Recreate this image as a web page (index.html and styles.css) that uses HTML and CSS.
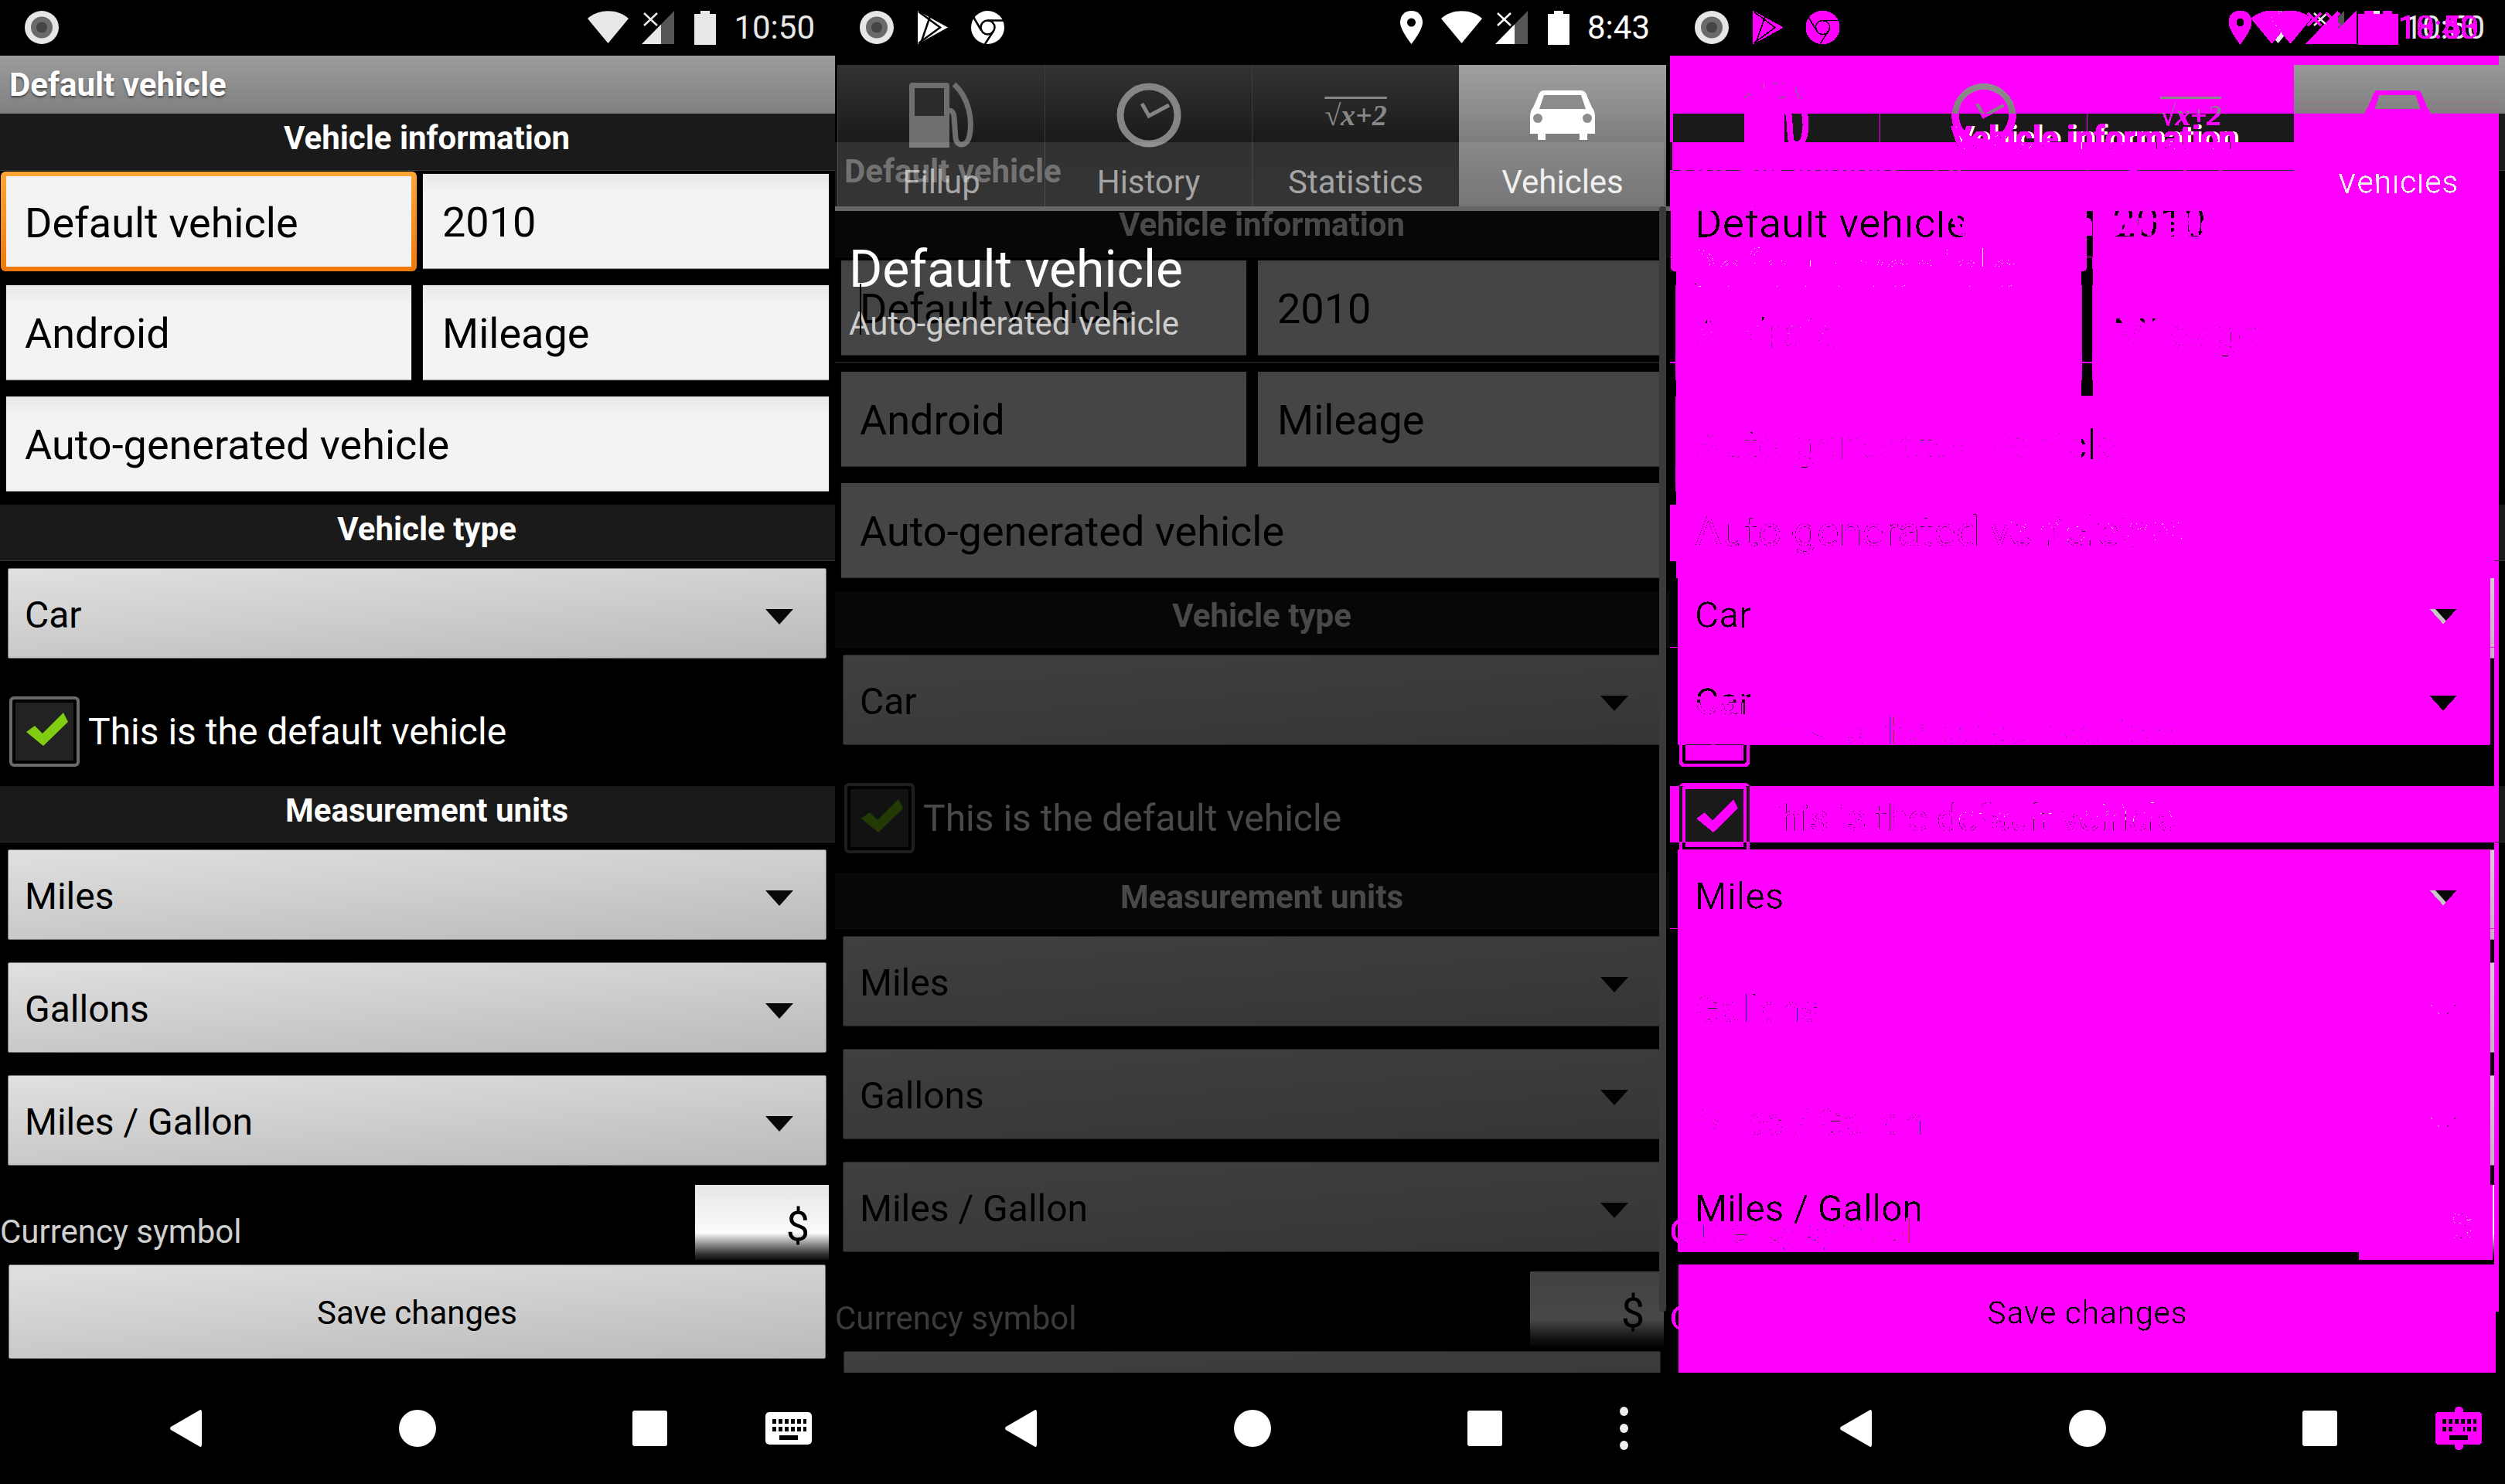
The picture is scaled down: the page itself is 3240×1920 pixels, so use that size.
FILE: index.html
```html
<!DOCTYPE html>
<html lang="en">
<head>
  <meta charset="UTF-8" />
  <title>Default vehicle</title>
  <link rel="stylesheet" href="styles.css">
</head>
<body>
  <svg class="defs" width="0" height="0" aria-hidden="true">
    <defs>
      <!-- any per-pixel difference above the tolerance turns solid magenta -->
      <filter id="diffmask" x="0" y="0" width="100%" height="100%" color-interpolation-filters="sRGB">
        <feColorMatrix type="matrix" values="0 0 0 0 1  0 0 0 0 0  0 0 0 0 1  40 40 40 0 -4.8" />
      </filter>
      <symbol id="i-dot" viewBox="0 0 44 43">
        <ellipse cx="22" cy="21.5" rx="22" ry="21.5" fill="#e6e6e6" />
        <circle cx="22" cy="21.5" r="14" fill="#6a6a6a" />
        <circle cx="22" cy="21.5" r="7" fill="#444" />
      </symbol>
      <symbol id="i-wifi" viewBox="0 0 53 42">
        <path d="M0 10C14-3 39-3 53 10L26.5 42Z" fill="currentColor" />
      </symbol>
      <symbol id="i-signal" viewBox="0 0 42 43">
        <path d="M25 43H42V0L25 17.4Z" fill="#555" />
        <path d="M0 43H25V17.4Z" fill="currentColor" />
        <path d="M3 3L20 19M20 3L3 19" stroke="currentColor" stroke-width="2.5" fill="none" />
      </symbol>
      <symbol id="i-battery" viewBox="0 0 28 44">
        <path d="M8 0H20V4H28V44H0V4H8Z" fill="currentColor" />
      </symbol>
      <symbol id="i-play" viewBox="0 0 39 43">
        <path d="M0 0L39 21.5L0 43Z" fill="#fff" />
        <path d="M1 1L29 21.5L1 42M16 7L4 42" stroke="#000" stroke-width="2.5" fill="none" />
      </symbol>
      <symbol id="i-chrome" viewBox="0 0 43 43">
        <circle cx="21.5" cy="21.5" r="21.5" fill="#fff" />
        <circle cx="21.5" cy="21.5" r="9" fill="#fff" stroke="#000" stroke-width="2.5" />
        <path d="M21.5 12.5H42M13 25L3 8M29 26L18 43" stroke="#000" stroke-width="2.5" fill="none" />
      </symbol>
      <symbol id="i-pin" viewBox="0 0 29 43">
        <path d="M14.5 0C6 0 0 6 0 15C0 25 14.5 43 14.5 43S29 25 29 15C29 6 23 0 14.5 0Z" fill="#fff" />
        <circle cx="14.5" cy="15" r="5.5" fill="#000" />
      </symbol>
    </defs>
  </svg>

  <section class="phone phone-live">
    <header class="status">
      <svg class="ico-dot"><use href="#i-dot" /></svg>
      <div class="status-right">
        <svg class="ico-wifi"><use href="#i-wifi" /></svg>
        <svg class="ico-signal"><use href="#i-signal" /></svg>
        <svg class="ico-battery"><use href="#i-battery" /></svg>
        <span class="clock">10:50</span>
      </div>
    </header>
    <main class="main">
      <div class="title">Default vehicle</div>
      <div class="form">
        <div class="head">Vehicle information</div>
        <div class="fields">
          <div class="field is-focused">Default vehicle</div>
          <div class="field">2010</div>
          <div class="field">Android</div>
          <div class="field">Mileage</div>
          <div class="field wide">Auto-generated vehicle</div>
        </div>
        <div class="head head-type">Vehicle type</div>
        <div class="spinner first">Car</div>
        <label class="check-row">
          <span class="checkbox">
            <svg viewBox="0 0 91 91" width="91" height="91"><path d="M22 46L33 38L43 48L70 21L76 33L44 64Z" fill="#7fcc12" /></svg>
          </span>
          This is the default vehicle
        </label>
        <div class="head head-units">Measurement units</div>
        <div class="spinner first">Miles</div>
        <div class="spinner">Gallons</div>
        <div class="spinner">Miles / Gallon</div>
        <div class="currency-row">
          <span class="currency-label">Currency symbol</span>
          <span class="currency-input">$</span>
        </div>
        <button class="save" type="button">Save changes</button>
      </div>
    </main>
    <nav class="nav">
      <svg class="nav-back" viewBox="0 0 42 48"><path d="M40 0Q42 0 42 3V45Q42 48 40 48L2 26Q0 24 2 22Z" /></svg>
      <span class="nav-home"></span>
      <span class="nav-square"></span>
      <svg class="nav-keyboard" viewBox="0 0 60 42">
        <rect width="60" height="42" rx="5" fill="#fff" />
        <path d="M9 9h5v6H9zM17 9h5v6h-5zM25 9h5v6h-5zM33 9h5v6h-5zM41 9h5v6h-5zM49 9h4v6h-4zM9 19h5v6H9zM17 19h5v6h-5zM25 19h5v6h-5zM33 19h5v6h-5zM41 19h5v6h-5zM49 19h4v6h-4zM18 30h24v6H18z" fill="#000" />
      </svg>
    </nav>
  </section>

  <section class="phone phone-dialog">
    <header class="status">
      <div class="status-left">
        <svg class="ico-dot"><use href="#i-dot" /></svg>
        <svg class="ico-play"><use href="#i-play" /></svg>
        <svg class="ico-chrome"><use href="#i-chrome" /></svg>
      </div>
      <div class="status-right">
        <svg class="ico-pin"><use href="#i-pin" /></svg>
        <svg class="ico-wifi"><use href="#i-wifi" /></svg>
        <svg class="ico-signal"><use href="#i-signal" /></svg>
        <svg class="ico-battery"><use href="#i-battery" /></svg>
        <span class="clock">8:43</span>
      </div>
    </header>
    <main class="main">
      <div class="behind"></div>
      <div class="tabs">
        <div class="tab">
          <span class="tab-icon">
            <svg viewBox="0 0 84 84" width="84" height="84">
              <path d="M4 0H48Q52 0 52 4V84H0V4Q0 0 4 0Z" fill="#6e6e6e" />
              <rect x="7" y="7" width="38" height="36" fill="#2a2a2a" />
              <path d="M58 2C78 20 82 50 78 68C76 82 62 84 60 72L58 44Q57 36 52 36" stroke="#6e6e6e" stroke-width="7" fill="none" />
            </svg>
          </span>
          Fillup
        </div>
        <div class="tab">
          <span class="tab-icon">
            <svg viewBox="0 0 84 84" width="84" height="84">
              <circle cx="42" cy="42" r="37" stroke="#858585" stroke-width="9" fill="none" />
              <path d="M33 27L42 43L68 29" stroke="#858585" stroke-width="5" fill="none" />
            </svg>
          </span>
          History
        </div>
        <div class="tab">
          <span class="tab-icon"><span class="formula">√x+2</span></span>
          Statistics
        </div>
        <div class="tab is-current">
          <span class="tab-icon">
            <svg viewBox="0 0 84 64" width="84" height="64">
              <path d="M18 0H66Q72 0 74 8L80 22Q84 26 84 34V56H74V64H64V56H20V64H10V56H0V34Q0 26 4 22L10 8Q12 0 18 0Z" fill="#fff" />
              <path d="M18 6H66L72 24H12Z" fill="#8c8c8c" />
              <circle cx="10" cy="36" r="6" fill="#8c8c8c" />
              <circle cx="74" cy="36" r="6" fill="#8c8c8c" />
            </svg>
          </span>
          Vehicles
        </div>
      </div>
      <div class="ghost-title">Default vehicle</div>
      <div class="scrollbar"></div>
      <div class="dialog-title">
        <div class="dialog-name">Default vehicle</div>
        <div class="dialog-sub">Auto-generated vehicle</div>
        <span class="cursor"></span>
      </div>
    </main>
    <nav class="nav">
      <svg class="nav-back" viewBox="0 0 42 48"><path d="M40 0Q42 0 42 3V45Q42 48 40 48L2 26Q0 24 2 22Z" /></svg>
      <span class="nav-home"></span>
      <span class="nav-square"></span>
      <span class="nav-dots"><i></i><i></i><i></i></span>
    </nav>
  </section>

  <section class="phone phone-diff">
    <div class="diff-mask"></div>
  </section>

  <script src="script.js"></script>
</body>
</html>
```

FILE: styles.css
```css
* {
  box-sizing: border-box;
}

body {
  margin: 0;
  background-color: #000;
  color: #fff;
  font-family: Roboto, "Liberation Sans", sans-serif;
  display: flex;
  width: 3240px;
  height: 1920px;
  overflow: hidden;
}

.defs {
  position: absolute;
}

.phone {
  position: relative;
  flex: 0 0 1080px;
  height: 1920px;
  display: flex;
  flex-direction: column;
  background-color: #000;
  overflow: hidden;
}

/* status bar */
.status {
  flex: 0 0 72px;
  padding: 14px 26px 0 32px;
  display: flex;
  justify-content: space-between;
  align-items: flex-start;
  color: #fff;
}

.phone-live .status {
  color: #e8e8e8;
}

.status-left,
.status-right {
  display: flex;
  align-items: flex-start;
}

.status svg {
  display: block;
  flex: none;
}

.ico-dot { width: 44px; height: 43px; }
.ico-play { width: 39px; height: 43px; margin-left: 31px; }
.ico-chrome { width: 43px; height: 43px; margin-left: 30px; }
.ico-pin { width: 29px; height: 43px; margin-right: 24px; }
.ico-wifi { width: 53px; height: 42px; margin-right: 17px; }
.ico-signal { width: 42px; height: 43px; margin-right: 26px; }
.ico-battery { width: 28px; height: 44px; margin-right: 23px; }

.clock {
  font-size: 42px;
  line-height: 44px;
}

/* main area */
.main {
  position: relative;
  flex: 0 0 1704px;
  overflow: hidden;
}

.title {
  height: 75px;
  padding-left: 12px;
  background: linear-gradient(#9c9c9c, #808080);
  font-size: 42px;
  font-weight: 700;
  line-height: 75px;
  text-shadow: 0 2px 3px #444;
}

.head {
  height: 74px;
  padding-left: 24px;
  background-color: #1a1a1a;
  border-bottom: 1px solid #333;
  font-size: 42px;
  font-weight: 700;
  line-height: 64px;
  text-align: center;
}

.head-type {
  height: 73px;
  margin-top: 17px;
}

.head-units {
  height: 73px;
  margin-top: 25px;
}

.fields {
  display: grid;
  grid-template-columns: 524px 525px;
  column-gap: 15px;
  row-gap: 21px;
  padding: 4px 0 0 8px;
}

.field {
  height: 123px;
  padding: 3px 0 0 24px;
  display: flex;
  align-items: center;
  background: linear-gradient(#e9e9e9, #f3f3f3 22%);
  border-bottom: 1px solid #999;
  box-shadow: 0 0 1px #666;
  color: #000;
  font-size: 54px;
}

.field:nth-child(even) {
  padding-left: 25px;
}

.field.wide {
  grid-column: 1 / 3;
}

.field.is-focused {
  height: 129px;
  margin: -3px -7px;
  padding-left: 24px;
  border: solid transparent;
  border-width: 6px 7px;
  border-radius: 6px;
  background:
    linear-gradient(#f2f2f2, #f2f2f2) padding-box,
    linear-gradient(#ffa637, #f0780a) border-box;
  box-shadow: none;
}

.spinner {
  position: relative;
  height: 117px;
  margin: 29px 11px 0 10px;
  padding: 3px 0 0 21px;
  display: flex;
  align-items: center;
  background: linear-gradient(176deg, #e0e0e0, #bababa);
  border: 1px solid #777;
  border-radius: 2px;
  color: #000;
  font-size: 48px;
}

.spinner.first {
  margin-top: 9px;
}

.spinner::after {
  content: "";
  position: absolute;
  right: 42px;
  top: 52px;
  border-style: solid;
  border-width: 20px 18px 0;
  border-color: #080808 transparent transparent;
}

.check-row {
  height: 91px;
  margin-top: 49px;
  padding-left: 12px;
  display: flex;
  align-items: center;
  gap: 11px;
  font-size: 48px;
}

.checkbox {
  flex: 0 0 91px;
  height: 91px;
  background-color: #222;
  border: 4px solid #6a6a6a;
  border-radius: 6px;
  box-shadow: inset 0 0 0 4px #000;
  overflow: hidden;
}

.checkbox svg {
  display: block;
  margin: -4px;
}

.behind .checkbox {
  background-color: #3f3f3f;
}

.currency-row {
  height: 97px;
  margin-top: 25px;
  display: flex;
  justify-content: space-between;
}

.currency-label {
  align-self: flex-end;
  padding-bottom: 8px;
  color: #d0d0d0;
  font-size: 42px;
  line-height: 56px;
}

.currency-input {
  width: 173px;
  margin-right: 8px;
  padding: 10px 25px 0 0;
  display: flex;
  align-items: center;
  justify-content: flex-end;
  background: linear-gradient(#e6e6e6, #fbfbfb 64%, #333 92%, #111);
  color: #000;
  font-size: 54px;
}

.save {
  display: block;
  width: 1057px;
  height: 122px;
  margin: 6px 0 0 11px;
  padding: 2px 0 0;
  background: linear-gradient(176deg, #e0e0e0, #bababa);
  border: 1px solid #777;
  border-radius: 2px;
  color: #000;
  font-family: inherit;
  font-size: 42px;
}

/* dialog screenshot */
.behind {
  height: 1704px;
  padding-top: 187px;
  filter: brightness(0.285);
}

.tabs {
  position: absolute;
  top: 12px;
  left: 0;
  width: 1080px;
  height: 189px;
  padding: 0 4px 0 3px;
  display: flex;
  background-color: #000;
  border-bottom: 6px solid #666;
}

.tab {
  flex: 0 0 268px;
  height: 183px;
  display: flex;
  flex-direction: column;
  align-items: center;
  background: linear-gradient(#333, #1a1a1a 55%, #1e1e1e);
  border-left: 1px solid #3c3c3c;
  color: #9a9a9a;
  font-size: 42px;
  line-height: 44px;
}

.tab.is-current {
  height: 189px;
  background: linear-gradient(#a0a0a0, #7d7d7d 53%, #646464);
  border-left: 0;
  color: #eee;
}

.tab-icon {
  flex: 0 0 130px;
  display: flex;
  align-items: center;
  justify-content: center;
}

.formula {
  color: #888;
  font-family: "Liberation Serif", serif;
  font-size: 38px;
  font-style: italic;
  font-weight: 700;
  text-decoration: overline;
}

.ghost-title {
  position: absolute;
  top: 112px;
  left: 0;
  width: 1072px;
  height: 83px;
  padding-left: 12px;
  background-color: rgba(255, 255, 255, 0.1);
  color: rgba(255, 255, 255, 0.32);
  font-size: 42px;
  font-weight: 700;
  line-height: 75px;
}

.scrollbar {
  position: absolute;
  top: 195px;
  left: 1066px;
  width: 9px;
  height: 1430px;
  background-color: #3a3a3a;
  border-radius: 4px;
}

.dialog-title {
  position: absolute;
  top: 238px;
  left: 0;
  width: 1066px;
  height: 160px;
  padding: 0 0 0 18px;
  border-bottom: 2px solid #1e1e1e;
}

.dialog-name {
  font-size: 66px;
  line-height: 78px;
}

.dialog-sub {
  margin-top: 6px;
  color: #ccc;
  font-size: 42px;
  line-height: 50px;
}

.cursor {
  position: absolute;
  left: 32px;
  top: 57px;
  width: 2px;
  height: 66px;
  background-color: #000;
}

/* nav bar */
.nav {
  flex: 0 0 144px;
  padding-left: 90px;
  display: grid;
  grid-template-columns: 300px 300px 300px 60px;
  align-items: center;
  justify-items: center;
}

.nav-back {
  width: 42px;
  height: 48px;
  fill: #fff;
}

.nav-home {
  width: 48px;
  height: 48px;
  background-color: #fff;
  border-radius: 50%;
}

.nav-square {
  width: 45px;
  height: 46px;
  background-color: #fff;
  border-radius: 3px;
}

.nav-keyboard {
  width: 60px;
  height: 42px;
}

.nav-dots {
  display: flex;
  flex-direction: column;
  gap: 10px;
}

.nav-dots i {
  width: 11px;
  height: 12px;
  background-color: #eee;
  border-radius: 50%;
}

/* comparison panel: the two screens differenced and thresholded over the first */
.phone-diff > .phone,
.diff-mask {
  position: absolute;
  top: 0;
  left: 0;
  width: 1080px;
  height: 1920px;
}

.diff-mask {
  filter: url(#diffmask);
  background-color: #000;
}

.diff-mask .phone {
  position: absolute;
  top: 0;
  left: 0;
}

.diff-mask .phone-dialog {
  mix-blend-mode: difference;
}
```

FILE: script.js
```js
// the dialog sits on the same form, and the third panel compares the two screens
const live = document.querySelector(".phone-live");
const dialog = document.querySelector(".phone-dialog");

const form = live.querySelector(".form").cloneNode(true);
form.querySelector(".is-focused").classList.remove("is-focused");
// the save label falls below the clipped edge of the dialog's backdrop
form.querySelector(".save").textContent = "";
dialog.querySelector(".behind").appendChild(form);

const diff = document.querySelector(".phone-diff");
const mask = diff.querySelector(".diff-mask");
diff.insertBefore(live.cloneNode(true), mask);
mask.appendChild(live.cloneNode(true));
mask.appendChild(dialog.cloneNode(true));
```
